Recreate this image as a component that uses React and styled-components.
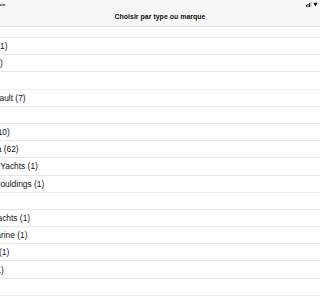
import React from 'react';
import styled, { createGlobalStyle } from 'styled-components';

const GlobalStyle = createGlobalStyle`
  html, body {
    margin: 0;
    padding: 0;
    background: #ffffff;
    overflow: hidden;
  }
  body {
    font-family: "Liberation Sans", Arial, Helvetica, sans-serif;
    color: #111111;
  }
`;

const Screen = styled.div`
  width: 320px;
  height: 300px;
  overflow: hidden;
  background: #ffffff;
  display: flex;
  flex-direction: column;
`;

const Header = styled.div`
  background: #f7f7f7;
  border-bottom: 1px solid #dcdcdc;
  height: 26px;
  display: flex;
  flex-direction: column;
  flex-shrink: 0;
`;

const StatusBar = styled.div`
  height: 9px;
  display: flex;
  justify-content: space-between;
  align-items: center;
  padding: 0 2px 0 0;
`;

const StatusText = styled.span`
  font-size: 4px;
  font-weight: bold;
  line-height: 4px;
  margin-left: -2px;
`;

const NavBar = styled.div`
  flex: 1;
  display: flex;
  align-items: center;
  justify-content: center;
  padding-bottom: 2px;
`;

const Title = styled.h1`
  margin: 0;
  font-size: 7px;
  font-weight: bold;
  letter-spacing: 0;
`;

// la liste est décalée vers la gauche, le début des noms sort de l'écran
const List = styled.div`
  display: flex;
  flex-direction: column;
  margin-left: -34px;
`;

const Row = styled.div`
  height: ${p => p.$h || 16.2}px;
  border-bottom: 1px solid ${p => (p.$light ? '#efefef' : '#e6e6e6')};
  display: flex;
  align-items: center;
  font-size: 8.4px;
  white-space: nowrap;
  flex-shrink: 0;
`;

const StatusIcons = () => (
  <svg width="12" height="5" viewBox="0 0 12 5">
    <rect x="0" y="3" width="1" height="2" fill="#222" />
    <rect x="1.5" y="2" width="1" height="3" fill="#222" />
    <rect x="3" y="1" width="1" height="4" fill="#222" />
    <rect x="4.5" y="0" width="1" height="5" fill="#aaa" />
    <path d="M7.5 1.5 Q9.5 -0.3 11.5 1.5 L9.5 4.5 Z" fill="#222" />
  </svg>
);

const rows = [
  { text: '', h: 10 },
  { text: 'Contest (1)' },
  { text: 'Hanse (1)' },
  { text: '', light: true },
  { text: 'Archambault (7)' },
  { text: '' },
  { text: 'Rustler (10)' },
  { text: 'Contessa (62)' },
  { text: 'Princess Yachts (1)' },
  { text: 'Hunter Mouldings (1)', light: true },
  { text: '' },
  { text: 'Trader Yachts (1)' },
  { text: 'Mano Marine (1)' },
  { text: 'Catalina (1)' },
  { text: 'Moody (1)' },
  { text: '', light: true },
  { text: '' },
];

const App = () => (
  <Screen>
    <GlobalStyle />
    <Header>
      <StatusBar>
        <StatusText>ipin</StatusText>
        <StatusIcons />
      </StatusBar>
      <NavBar>
        <Title>Choisir par type ou marque</Title>
      </NavBar>
    </Header>
    <List>
      {rows.map((r, i) => (
        <Row key={i} $h={r.h} $light={r.light}>{r.text}</Row>
      ))}
    </List>
  </Screen>
);

export default App;
